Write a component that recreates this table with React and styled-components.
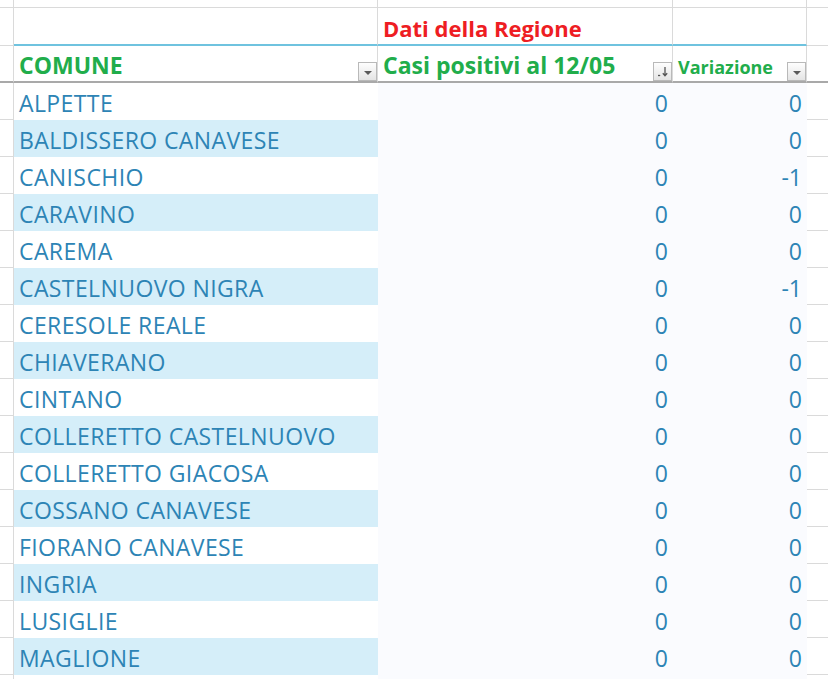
import React from "react";
import styled, { createGlobalStyle } from "styled-components";

const GlobalStyle = createGlobalStyle`
  html, body {
    margin: 0;
    padding: 0;
    background: #ffffff;
    overflow: hidden;
  }
  body {
    font-family: "Open Sans", "Noto Sans", sans-serif;
  }
`;

const GRID = "#dadada";

const Sheet = styled.div`
  display: flex;
  flex-direction: column;
  width: 828px;
  height: 679px;
  overflow: hidden;
`;

const Row = styled.div`
  display: grid;
  grid-template-columns: 14px 364px 295px 134px 1fr;
  height: ${(p) => p.h}px;
  flex: none;
`;

const Cell = styled.div`
  box-sizing: border-box;
  display: flex;
  align-items: flex-end;
  justify-content: ${(p) => (p.right ? "flex-end" : "space-between")};
  padding: 0 ${(p) => (p.right ? 5 : 0)}px 0 ${(p) => (p.right ? 0 : 5)}px;
  background: ${(p) => p.bg || "#ffffff"};
  border-right: ${(p) => (p.vline ? `1px solid ${GRID}` : "none")};
  border-bottom: ${(p) => p.hline || "none"};
  overflow: hidden;
  white-space: nowrap;
`;

const RegionTitle = styled.span`
  color: #ee1d23;
  font-weight: 700;
  font-size: 22px;
  line-height: 22px;
  padding-bottom: 5px;
`;

const HeadText = styled.span`
  color: #21ad4b;
  font-weight: 700;
  font-size: ${(p) => p.size || 23}px;
  line-height: 22px;
  padding-bottom: ${(p) => (p.size ? 3 : 5)}px;
`;

const Name = styled.span`
  color: #2d84b5;
  font-size: 23px;
  letter-spacing: 0.4px;
  line-height: 22px;
  padding-bottom: 6px;
`;

const Num = styled(Name)`
  letter-spacing: 0;
`;

const FilterButton = styled.span`
  box-sizing: border-box;
  width: 19px;
  height: 19px;
  flex: none;
  display: flex;
  align-items: center;
  justify-content: center;
  border: 1px solid #b9b9b9;
  background: linear-gradient(#fefefe, #e4e4e4);
`;

const Caret = styled.span`
  width: 0;
  height: 0;
  border-left: 4px solid transparent;
  border-right: 4px solid transparent;
  border-top: 4px solid #5a5a5a;
  margin-top: 2px;
`;

const SortIcon = () => (
  <svg width="17" height="17" viewBox="0 0 17 17">
    <path d="M4 12.5h2.2" stroke="#555" strokeWidth="1.3" fill="none" />
    <path d="M11 4v8.5M8.8 10.3l2.2 2.4 2.2-2.4" stroke="#555" strokeWidth="1.3" fill="none" />
  </svg>
);

const rows = [
  ["ALPETTE", 0, 0],
  ["BALDISSERO CANAVESE", 0, 0],
  ["CANISCHIO", 0, -1],
  ["CARAVINO", 0, 0],
  ["CAREMA", 0, 0],
  ["CASTELNUOVO NIGRA", 0, -1],
  ["CERESOLE REALE", 0, 0],
  ["CHIAVERANO", 0, 0],
  ["CINTANO", 0, 0],
  ["COLLERETTO CASTELNUOVO", 0, 0],
  ["COLLERETTO GIACOSA", 0, 0],
  ["COSSANO CANAVESE", 0, 0],
  ["FIORANO CANAVESE", 0, 0],
  ["INGRIA", 0, 0],
  ["LUSIGLIE", 0, 0],
  ["MAGLIONE", 0, 0],
  ["", "", ""],
];

const thin = `1px solid ${GRID}`;
const blue = "2px solid #6fc3df";
const heavy = "2px solid #a9a9a9";

export default function App() {
  return (
    <>
      <GlobalStyle />
      <Sheet>
        <Row h={8}>
          <Cell vline hline={thin} />
          <Cell vline hline={thin} />
          <Cell vline hline={thin} />
          <Cell vline hline={thin} />
          <Cell hline={thin} />
        </Row>
        <Row h={38}>
          <Cell vline hline={thin} />
          <Cell vline hline={blue} />
          <Cell vline hline={blue}>
            <RegionTitle>Dati della Regione</RegionTitle>
          </Cell>
          <Cell vline hline={blue} />
          <Cell hline={thin} />
        </Row>
        <Row h={37}>
          <Cell vline hline={heavy} />
          <Cell vline hline={heavy}>
            <HeadText>COMUNE</HeadText>
            <FilterButton>
              <Caret />
            </FilterButton>
          </Cell>
          <Cell vline hline={heavy}>
            <HeadText>Casi positivi al 12/05</HeadText>
            <FilterButton>
              <SortIcon />
            </FilterButton>
          </Cell>
          <Cell vline hline={heavy}>
            <HeadText size={18}>Variazione</HeadText>
            <FilterButton>
              <Caret />
            </FilterButton>
          </Cell>
          <Cell hline={heavy} />
        </Row>
        {rows.map(([name, casi, vari], i) => (
          <Row h={37} key={i}>
            <Cell vline hline={thin} />
            <Cell bg={i % 2 === 1 ? "#d5eef9" : "#ffffff"}>
              <Name>{name}</Name>
            </Cell>
            <Cell right bg="#fafbfe">
              <Num>{casi}</Num>
            </Cell>
            <Cell right bg="#fafbfe">
              <Num>{vari}</Num>
            </Cell>
            <Cell hline={thin} />
          </Row>
        ))}
      </Sheet>
    </>
  );
}
